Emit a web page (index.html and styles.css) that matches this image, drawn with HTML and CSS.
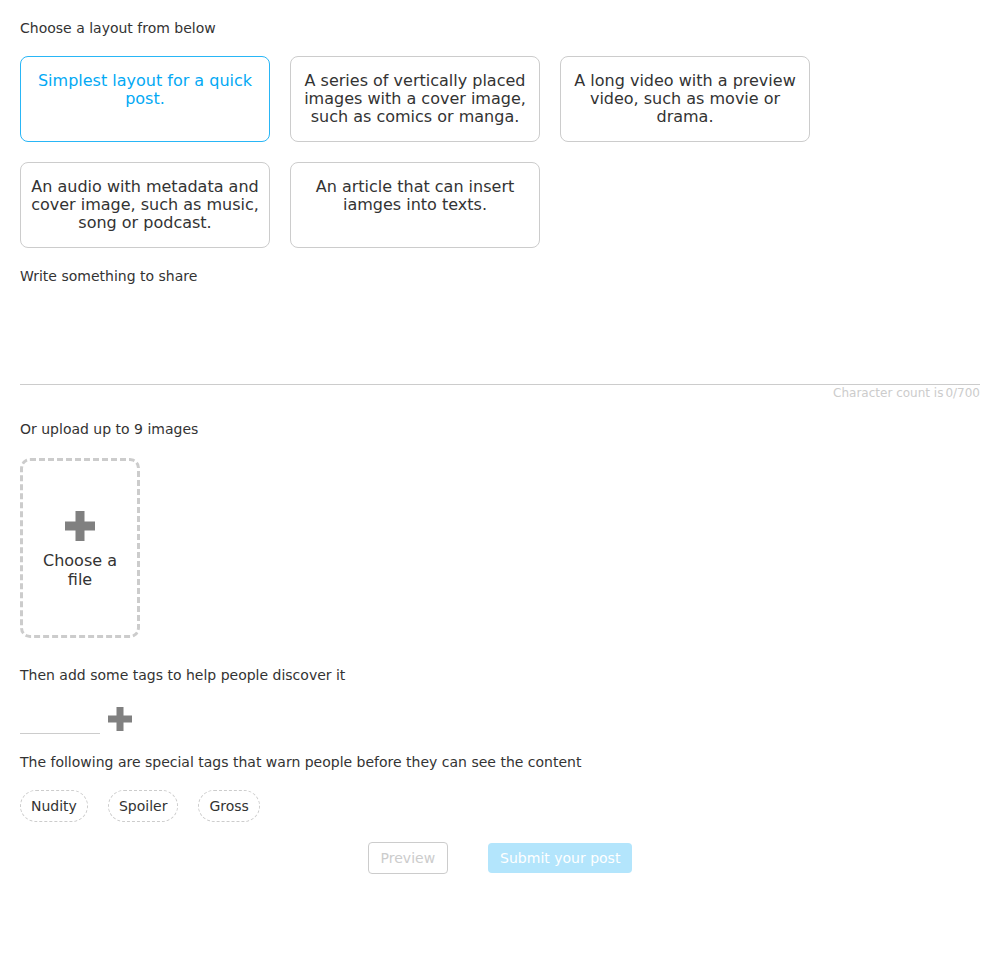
FILE: index.html
```html
<!DOCTYPE html>
<html>
<head>
<meta charset="utf-8">
<link rel="stylesheet" href="styles.css">
</head>
<body>
<div class="page">
  <div class="label">Choose a layout from below</div>
  <div class="layouts">
    <div class="card selected">Simplest layout for a quick post.</div>
    <div class="card">A series of vertically placed images with a cover image, such as comics or manga.</div>
    <div class="card">A long video with a preview video, such as movie or drama.</div>
    <div class="card">An audio with metadata and cover image, such as music, song or podcast.</div>
    <div class="card">An article that can insert iamges into texts.</div>
  </div>

  <div class="label">Write something to share</div>
  <div class="textarea"></div>
  <div class="count">Character count is<span>0/700</span></div>

  <div class="label upload-label">Or upload up to 9 images</div>
  <div class="upload">
    <svg class="plus" width="30" height="30" viewBox="0 0 30 30"><path d="M10.5 0h9v10.5H30v9H19.5V30h-9V19.5H0v-9h10.5z" fill="#808080"/></svg>
    <div class="upload-text">Choose a file</div>
  </div>

  <div class="label tags-label">Then add some tags to help people discover it</div>
  <div class="tag-input-row">
    <div class="tag-input"></div>
    <svg class="plus-small" width="24" height="24" viewBox="0 0 24 24"><path d="M8.5 0h7v8.5H24v7h-8.5V24h-7v-8.5H0v-7h8.5z" fill="#808080"/></svg>
  </div>

  <div class="label special-label">The following are special tags that warn people before they can see the content</div>
  <div class="tags">
    <div class="tag">Nudity</div>
    <div class="tag">Spoiler</div>
    <div class="tag">Gross</div>
  </div>

  <div class="actions">
    <div class="btn preview">Preview</div>
    <div class="btn submit">Submit your post</div>
  </div>
</div>
</body>
</html>
```

FILE: styles.css
```css
* { box-sizing: border-box; }
body {
  margin: 0;
  background: #fff;
  font-family: "DejaVu Sans", sans-serif;
  color: #333;
}
.page {
  padding: 19px 20px 0 20px;
  width: 1000px;
}
.label {
  font-size: 14px;
  line-height: 18px;
  color: #333;
}
.layouts {
  display: grid;
  grid-template-columns: repeat(3, 250px);
  gap: 20px;
  margin-top: 19px;
  margin-bottom: 19px;
}
.card {
  height: 86px;
  border: 1px solid #ccc;
  border-radius: 8px;
  padding: 15px 10px 0;
  text-align: center;
  font-size: 16px;
  line-height: 18px;
  color: #333;
}
.card.selected {
  border-color: #29b6f6;
  color: #03a9f4;
}
.textarea {
  height: 100px;
  border-bottom: 1px solid #ccc;
}
.count {
  text-align: right;
  font-size: 12px;
  line-height: 16px;
  color: #ccc;
}
.count span { margin-left: 2px; }
.upload-label { margin-top: 19px; }
.upload {
  margin-top: 20px;
  width: 120px;
  height: 180px;
  border: 3px dashed #ccc;
  border-radius: 10px;
  padding-top: 3px;
  display: flex;
  flex-direction: column;
  align-items: center;
  justify-content: center;
}
.plus { display: block; }
.upload-text {
  margin-top: 10px;
  font-size: 16px;
  line-height: 19px;
  text-align: center;
  width: 80px;
  color: #333;
}
.tags-label { margin-top: 28px; }
.tag-input-row {
  margin-top: 23px;
  display: flex;
  align-items: flex-start;
  gap: 8px;
}
.tag-input {
  width: 80px;
  height: 27px;
  border-bottom: 1px solid #ccc;
}
.plus-small { display: block; }
.special-label { margin-top: 19px; }
.tags {
  margin-top: 19px;
  display: flex;
  gap: 20px;
}
.tag {
  height: 32px;
  padding: 0 10px;
  border: 1px dashed #ccc;
  border-radius: 16px;
  font-size: 14px;
  line-height: 30px;
  color: #333;
}
.actions {
  margin-top: 20px;
  display: flex;
  justify-content: center;
  align-items: center;
  gap: 40px;
}
.btn {
  font-size: 14px;
  border-radius: 4px;
  padding: 0 12px;
}
.preview {
  height: 32px;
  line-height: 30px;
  border: 1px solid #ccc;
  color: #ccc;
}
.submit {
  height: 30px;
  line-height: 30px;
  background: #b3e5fc;
  color: #fff;
}
```
